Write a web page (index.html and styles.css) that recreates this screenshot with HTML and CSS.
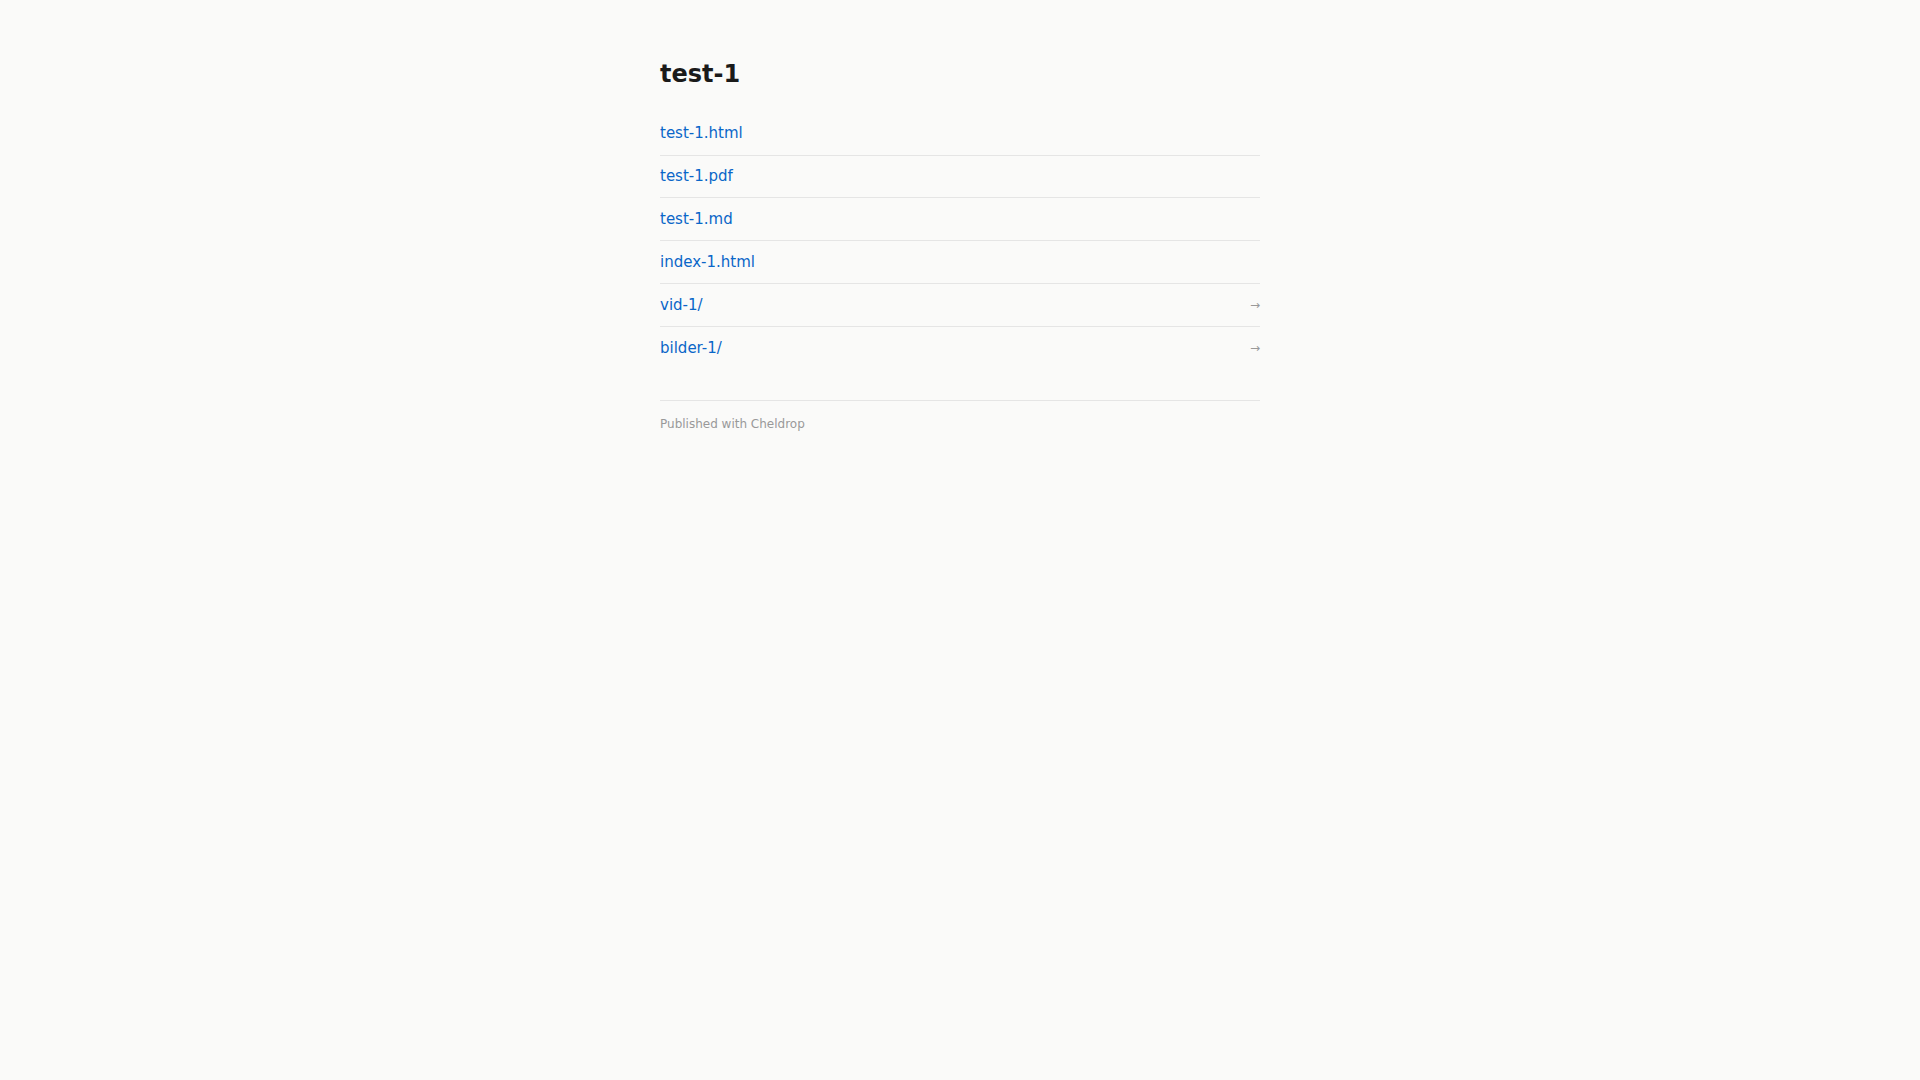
FILE: index.html
```html
<!DOCTYPE html>
<html lang="en">
<head>
<meta charset="utf-8">
<title>test-1</title>
<link rel="stylesheet" href="styles.css">
</head>
<body>
<main class="page">
  <h1 class="title">test-1</h1>
  <ul class="listing">
    <li class="entry"><a class="entry-link" href="#">test-1.html</a></li>
    <li class="entry"><a class="entry-link" href="#">test-1.pdf</a></li>
    <li class="entry"><a class="entry-link" href="#">test-1.md</a></li>
    <li class="entry"><a class="entry-link" href="#">index-1.html</a></li>
    <li class="entry"><a class="entry-link" href="#">vid-1/</a><span class="arrow">→</span></li>
    <li class="entry"><a class="entry-link" href="#">bilder-1/</a><span class="arrow">→</span></li>
  </ul>
  <footer class="footer">Published with Cheldrop</footer>
</main>
</body>
</html>
```

FILE: styles.css
```css
html, body {
  margin: 0;
  padding: 0;
  background: #fafaf9;
}

body {
  font-family: "DejaVu Sans", sans-serif;
  color: #1a1a1a;
}

.page {
  max-width: 600px;
  margin: 0 auto;
  padding: 60px 0 40px;
}

.title {
  font-size: 24px;
  font-weight: bold;
  line-height: 1.2;
  margin: 0 0 24px;
  color: #1a1a1a;
}

.listing {
  list-style: none;
  margin: 0;
  padding: 0;
}

.entry {
  display: flex;
  justify-content: space-between;
  align-items: center;
  padding: 9.68px 0;
  line-height: 22.5px;
  font-size: 15px;
  border-bottom: 1px solid #e5e5e5;
}

.entry:last-child {
  border-bottom: none;
}

.entry-link {
  color: #0a66c8;
  text-decoration: none;
}

.arrow {
  color: #999;
  font-size: 12px;
}

.footer {
  margin-top: 31px;
  border-top: 1px solid #e5e5e5;
  padding-top: 14.6px;
  font-size: 12px;
  line-height: 18px;
  color: #999;
}
```
